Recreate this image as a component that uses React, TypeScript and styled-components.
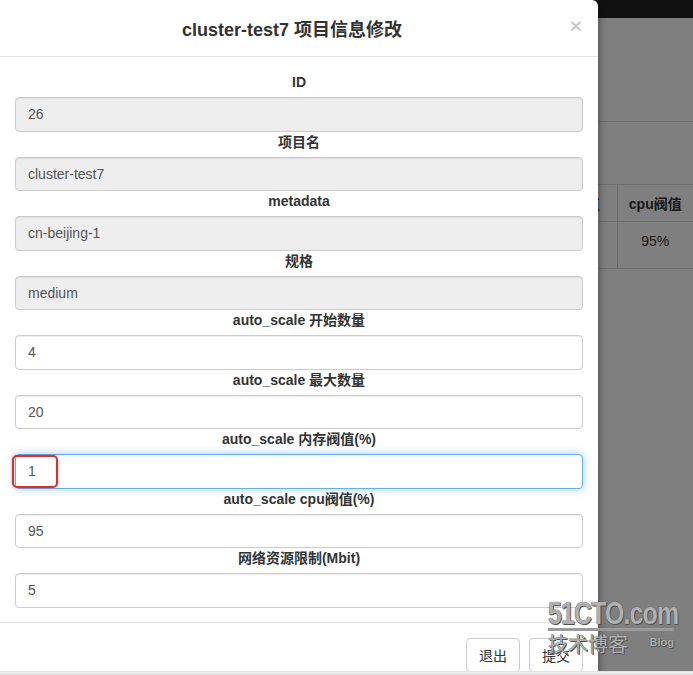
import styled, { createGlobalStyle } from 'styled-components'

const GlobalStyle = createGlobalStyle`
    html, body {
        margin: 0;
        padding: 0;
        width: 693px;
        height: 675px;
        overflow: hidden;
        background: #fff;
    }
    * {
        box-sizing: border-box;
    }
`

const font = `"Liberation Sans", "Noto Sans CJK SC", Arial, sans-serif`

interface Field {
    label: string;
    value: string;
    readOnly?: boolean;
    focused?: boolean;
}

const fields: Field[] = [
    { label: 'ID', value: '26', readOnly: true },
    { label: '项目名', value: 'cluster-test7', readOnly: true },
    { label: 'metadata', value: 'cn-beijing-1', readOnly: true },
    { label: '规格', value: 'medium', readOnly: true },
    { label: 'auto_scale 开始数量', value: '4' },
    { label: 'auto_scale 最大数量', value: '20' },
    { label: 'auto_scale 内存阀值(%)', value: '1', focused: true },
    { label: 'auto_scale cpu阀值(%)', value: '95' },
    { label: '网络资源限制(Mbit)', value: '5' },
]

const Screen = styled.div`
    position: relative;
    width: 693px;
    height: 675px;
    overflow: hidden;
    font-family: ${font};
    font-size: 14px;
    color: #333;
`

const Navbar = styled.div`
    height: 18px;
    background: #222;
`

const PageBody = styled.div`
    padding-top: 103px;
`

const Rule = styled.hr`
    margin: 0;
    border: 0;
    border-top: 1px solid #ddd;
`

const Table = styled.table`
    margin-top: 62px;
    margin-left: 527px;
    width: 166px;
    border-collapse: collapse;
    table-layout: fixed;

    th, td {
        border-top: 1px solid #ddd;
        border-bottom: 1px solid #ddd;
        padding: 8px 2px;
        text-align: center;
        white-space: nowrap;
    }
    th + th, td + td {
        border-left: 1px solid #ddd;
    }
    th {
        height: 37px;
        font-weight: bold;
    }
    td {
        height: 47px;
        vertical-align: top;
        padding-top: 11px;
    }
`

const Col = styled.col<{ w: number }>`
    width: ${({ w }) => w}px;
`

const Backdrop = styled.div`
    position: absolute;
    inset: 0;
    background: rgba(0, 0, 0, 0.5);
`

const Modal = styled.div`
    position: absolute;
    left: 0;
    top: 0;
    width: 598px;
    height: 700px;
    background: #fff;
    border-radius: 0 6px 0 0;
    box-shadow: 0 3px 9px rgba(0, 0, 0, 0.5);
    display: flex;
    flex-direction: column;
`

const Header = styled.div`
    height: 57px;
    border-bottom: 1px solid #e5e5e5;
    display: flex;
    align-items: center;
    justify-content: center;
    position: relative;
`

const Title = styled.h4`
    margin: 0 0 0 -14px;
    font-size: 18px;
    font-weight: bold;
    color: #333;
`

const Close = styled.span`
    position: absolute;
    right: 16px;
    top: 14px;
    font-size: 21px;
    font-weight: bold;
    color: #000;
    opacity: 0.2;
`

const Body = styled.div`
    padding: 15px 15px 14px;
`

const Group = styled.div`
    display: flex;
    flex-direction: column;
`

const Label = styled.label`
    text-align: center;
    font-weight: bold;
    line-height: 20px;
    margin-bottom: 5px;
`

const Input = styled.div<{ readOnly?: boolean; focused?: boolean }>`
    height: 34.5px;
    padding: 0 12px;
    display: flex;
    align-items: center;
    color: #555;
    border-radius: 4px;
    border: 1px solid ${({ focused }) => (focused ? '#66afe9' : '#ccc')};
    background: ${({ readOnly }) => (readOnly ? '#eee' : '#fff')};
    box-shadow: ${({ focused }) =>
        focused
            ? 'inset 0 1px 1px rgba(0,0,0,.075), 0 0 8px rgba(102,175,233,.6)'
            : 'inset 0 1px 1px rgba(0,0,0,.075)'};
    position: relative;
`

const Marker = styled.span`
    position: absolute;
    left: -4px;
    top: 0px;
    width: 46px;
    height: 33px;
    border: 2px solid #d8322c;
    border-radius: 5px;
    box-shadow: 0 0 2px rgba(216, 50, 44, 0.5);
`

const Footer = styled.div`
    border-top: 1px solid #e5e5e5;
    padding: 15px;
    display: flex;
    justify-content: flex-end;
    gap: 9px;
`

const Button = styled.button`
    height: 34px;
    padding: 6px 12px;
    font-family: ${font};
    font-size: 14px;
    color: #333;
    background: #fff;
    border: 1px solid #ccc;
    border-radius: 4px;
`

const Watermark = styled.div`
    position: absolute;
    left: 548px;
    top: 599px;
    width: 126px;
    font-family: "Liberation Sans", "Noto Sans CJK SC", sans-serif;
    color: #b0b0b0;
    text-shadow: 0 0 1px #444, 1px 1px 0 #555;
`

const WaterBrand = styled.div`
    border-bottom: 3px solid #9a9a9a;
    padding-bottom: 2px;
    height: 32px;
    overflow: visible;
`

const BrandText = styled.span`
    display: inline-block;
    font-size: 31px;
    font-weight: bold;
    line-height: 30px;
    letter-spacing: -1px;
    transform: scaleX(0.8);
    transform-origin: left;
    white-space: nowrap;
`

const WaterRow = styled.div`
    display: flex;
    align-items: flex-start;
    justify-content: space-between;
    margin-top: 2px;
`

const WaterCn = styled.span`
    font-size: 20px;
    line-height: 24px;
`

const WaterBlog = styled.span`
    font-size: 11px;
    font-weight: bold;
    line-height: 14px;
    margin-top: 2px;
`

const Dock = styled.div`
    position: absolute;
    left: 0;
    right: 0;
    bottom: 0;
    height: 4px;
    background: linear-gradient(#f2f2f2, #dcdcdc);
    border-top: 1px solid #e4e4e4;
`

export default function App() {
    return (
        <Screen>
            <GlobalStyle />
            <Navbar />
            <PageBody>
                <Rule />
                <Table>
                    <colgroup>
                        <Col w={90} />
                        <Col w={76} />
                    </colgroup>
                    <thead>
                        <tr>
                            <th>内存阀值</th>
                            <th>cpu阀值</th>
                        </tr>
                    </thead>
                    <tbody>
                        <tr>
                            <td>1%</td>
                            <td>95%</td>
                        </tr>
                    </tbody>
                </Table>
            </PageBody>
            <Backdrop />
            <Modal>
                <Header>
                    <Title>cluster-test7 项目信息修改</Title>
                    <Close>×</Close>
                </Header>
                <Body>
                    {fields.map((f) => (
                        <Group key={f.label}>
                            <Label>{f.label}</Label>
                            <Input readOnly={f.readOnly} focused={f.focused}>
                                {f.focused && <Marker />}
                                {f.value}
                            </Input>
                        </Group>
                    ))}
                </Body>
                <Footer>
                    <Button>退出</Button>
                    <Button>提交</Button>
                </Footer>
            </Modal>
            <Watermark>
                <WaterBrand>
                    <BrandText>51CTO.com</BrandText>
                </WaterBrand>
                <WaterRow>
                    <WaterCn>技术博客</WaterCn>
                    <WaterBlog>Blog</WaterBlog>
                </WaterRow>
            </Watermark>
            <Dock />
        </Screen>
    )
}
